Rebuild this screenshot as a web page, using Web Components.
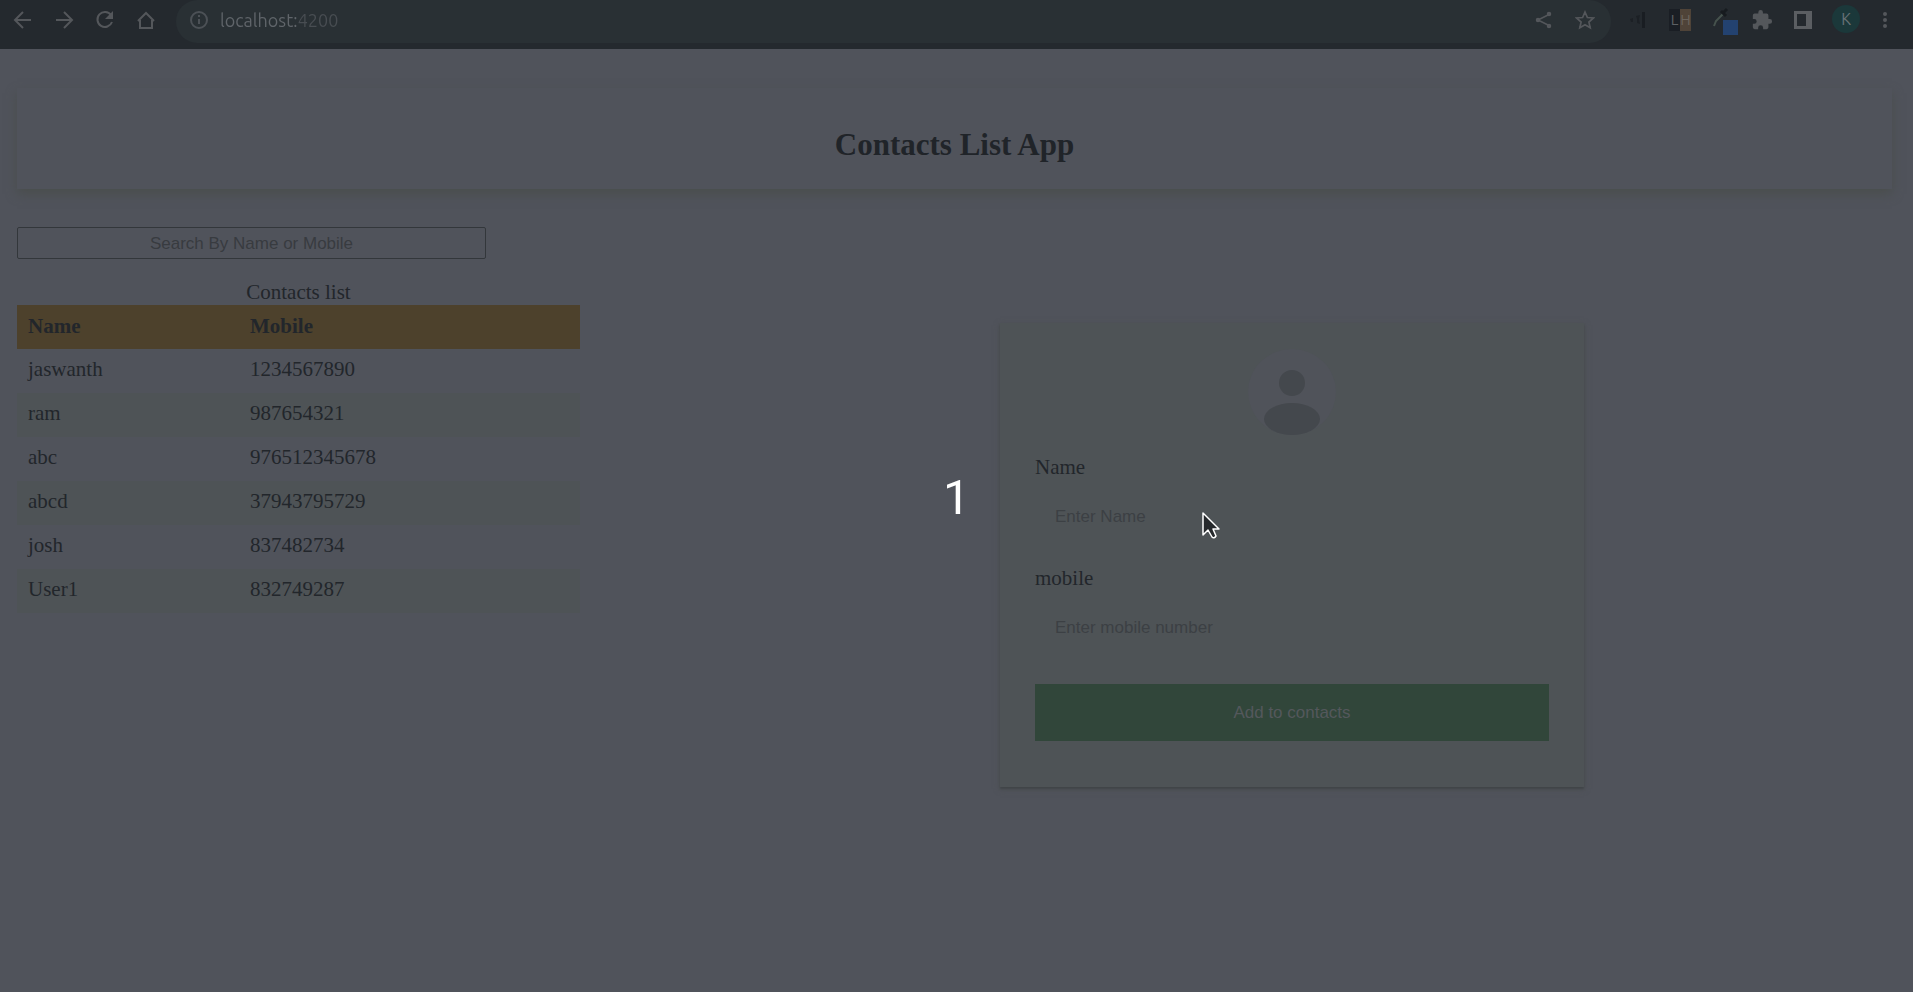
<!DOCTYPE html>
<html lang="en">
<head>
<meta charset="utf-8">
<title>Contacts List App</title>
<style>
  html, body { margin: 0; min-height: 100vh; }
  body { background: #50535b; color: #22262b; font-family: "Liberation Serif", serif; font-size: 21px; overflow-x: hidden; }
</style>
</head>
<body>
<contacts-app></contacts-app>
<script>
const define = (name, html) => {
  const t = document.createElement('template');
  t.innerHTML = html;
  customElements.define(name, class extends HTMLElement {
    constructor() {
      super();
      this.attachShadow({ mode: 'open' }).append(t.content.cloneNode(true));
    }
  });
};

define('browser-bar', `
<style>
  :host { display: flex; align-items: flex-start; height: 49px; box-sizing: border-box; background: #24292e; color: #54575b; font-family: Ubuntu, "Noto Sans", sans-serif; padding-right: 20px; }
  button { all: unset; display: grid; place-items: center; width: 24px; height: 39px; flex: none; }
  .menu { width: 16px; }
  svg { display: block; }
  .nav { display: flex; gap: 17px; padding: 0 18px 0 11px; }
  .address { flex: 1; display: flex; align-items: center; height: 43px; background: #293034; border-radius: 22px; box-sizing: border-box; padding: 0 14px 4px 13px; gap: 11px; }
  .address input { all: unset; flex: 1; font-size: 18px; line-height: 24px; color: transparent; background: linear-gradient(90deg, #60656a 76px, #484d52 76px); -webkit-background-clip: text; background-clip: text; }
  .acts { display: flex; gap: 17px; }
  .ext { display: flex; gap: 17px; padding-left: 16px; }
  .avatar { width: 28px; height: 28px; margin-top: 5px; border-radius: 50%; background: #1b383a; display: grid; place-items: center; font-size: 16px; color: #687276; }
  .lh { display: flex; width: 22px; height: 22px; margin: 9px 1px 0; font-size: 15px; line-height: 22px; text-align: center; color: #5d6063; }
  .lh b { flex: 1; background: #1a1e24; font-weight: 400; }
  .lh b + b { background: #4f4338; color: #6b645d; }
</style>
<nav class="nav" aria-label="Browser">
  <button aria-label="Back"><svg width="24" height="24" viewBox="0 0 24 24" fill="none" stroke="currentColor" stroke-width="2"><path d="M20 12H4M12 4l-8 8 8 8"/></svg></button>
  <button aria-label="Forward"><svg width="24" height="24" viewBox="0 0 24 24" fill="none" stroke="currentColor" stroke-width="2"><path d="M4 12h16M12 4l8 8-8 8"/></svg></button>
  <button aria-label="Reload"><svg width="24" height="24" viewBox="0 0 24 24" fill="none" stroke="currentColor" stroke-width="2"><path d="M18 7A7.500 7.500 0 1 0 19 14"/><path d="M20 3v8h-8z" fill="currentColor" stroke="none"/></svg></button>
  <button aria-label="Home"><svg width="24" height="24" viewBox="0 0 24 24" fill="none" stroke="currentColor" stroke-width="2"><path d="M4 13l8-8 8 8M6 12v8h12v-8"/></svg></button>
</nav>
<div class="address">
  <svg width="20" height="20" viewBox="0 0 20 20" fill="none" stroke="#4c5156" stroke-width="2"><circle cx="10" cy="10" r="8"/><path d="M10 9v5M10 5v2"/></svg>
  <input type="text" aria-label="Address" value="localhost:4200">
  <div class="acts">
    <button aria-label="Share"><svg width="20" height="20" viewBox="0 0 20 20" fill="currentColor" stroke="currentColor" stroke-width="1.500"><path d="M4 10L16 4M4 10l12 6" fill="none"/><circle cx="4" cy="10" r="1.500"/><circle cx="15" cy="4" r="1.500"/><circle cx="15" cy="16" r="1.500"/></svg></button>
    <button aria-label="Bookmark"><svg width="20" height="20" viewBox="0 0 20 20" fill="none" stroke="currentColor" stroke-width="1.700"><path d="M10 2l2.400 5.500 6 .5-4.500 4 1.300 5.800L10 14.700l-5.200 3.100L6.100 12 1.600 8l6-.5z"/></svg></button>
  </div>
</div>
<div class="ext">
  <button aria-label="Sound meter"><svg width="20" height="20" viewBox="0 0 20 20"><path d="M1 9l3-1v4H2zM7 6l4-1-1 4 1 5-3-1V9z" fill="#1c2025"/><path d="M13 2h3v16h-3z" fill="#191d22"/></svg></button>
  <div class="lh"><b>L</b><b>H</b></div>
  <button aria-label="Color picker"><svg width="30" height="32" viewBox="0 0 30 32"><path d="M5 22l2-5 7-7" fill="none" stroke="#46524d" stroke-width="2"/><path d="M12 7l5 5M14 9l4-4" stroke="#171b1f" stroke-width="3"/><path d="M14 16h15v15H14z" fill="#234270"/></svg></button>
  <button aria-label="Extensions"><svg width="22" height="22" viewBox="0 0 24 24" fill="currentColor"><path d="M20.500 11H19V7a2 2 0 0 0-2-2h-4V3.500a2.500 2.500 0 0 0-5 0V5H4a2 2 0 0 0-2 2v3.800h1.500a2.700 2.700 0 0 1 0 5.400H2V20a2 2 0 0 0 2 2h3.800v-1.500a2.700 2.700 0 0 1 5.400 0V22H17a2 2 0 0 0 2-2v-4h1.500a2.500 2.500 0 0 0 0-5z"/></svg></button>
  <button aria-label="Side panel"><svg width="18" height="18" viewBox="0 0 18 18"><path d="M0 0h18v18H0zM3 3v12h9V3z" fill="#5b5e62" fill-rule="evenodd"/></svg></button>
  <div class="avatar">K</div>
  <button class="menu" aria-label="Menu"><svg width="6" height="20" viewBox="0 0 6 20" fill="currentColor"><circle cx="3" cy="4" r="2"/><circle cx="3" cy="10" r="2"/><circle cx="3" cy="16" r="2"/></svg></button>
</div>`);

define('app-header', `
<style>
  :host { display: grid; place-items: center; height: 101px; box-shadow: 0 5px 10px #4a4e4d; background: #50535b; }
  h1 { margin: 12px 0 0; font-size: 31px; line-height: 36px; color: #202429; }
</style>
<h1><slot></slot></h1>`);

define('contact-search', `
<style>
  :host { display: block; }
  input { display: block; box-sizing: border-box; width: 100%; height: 32px; padding: 1px 0 0; border: 1px solid #33373b; border-radius: 2px; background: none; color: inherit; font: 17px "Liberation Sans", sans-serif; text-align: center; }
  input::placeholder { color: #383b40; opacity: 1; }
</style>
<input type="text" aria-label="Search contacts" placeholder="Search By Name or Mobile">`);

define('contact-table', `
<style>
  :host { display: block; }
  table { width: 100%; border-collapse: collapse; table-layout: fixed; line-height: 24px; }
  caption { padding-bottom: 1px; }
  th, td { height: 44px; box-sizing: border-box; padding: 8px 11px 12px; text-align: left; }
  th:first-child { width: 222px; }
  th { background: #4d412c; padding-top: 9px; padding-bottom: 11px; }
  tbody tr:nth-child(even) { background: #4e5356; }
</style>
<table>
  <caption>Contacts list</caption>
  <thead><tr><th scope="col">Name</th><th scope="col">Mobile</th></tr></thead>
  <tbody>
    <tr><td>jaswanth</td><td>1234567890</td></tr>
    <tr><td>ram</td><td>987654321</td></tr>
    <tr><td>abc</td><td>976512345678</td></tr>
    <tr><td>abcd</td><td>37943795729</td></tr>
    <tr><td>josh</td><td>837482734</td></tr>
    <tr><td>User1</td><td>832749287</td></tr>
  </tbody>
</table>`);

define('contact-form', `
<style>
  :host { display: block; box-sizing: border-box; width: 584px; max-width: 100%; padding: 26px 35px 46px; background: #4e5356; box-shadow: 0 2px 2px #414548, 0 2px 6px #4d5053; }
  svg { display: block; margin: 0 auto 20px; }
  label { display: block; line-height: 24px; }
  input { display: block; box-sizing: border-box; width: 100%; height: 51px; margin: 12px 0 24px; padding: 0 20px; border: 0; background: none; font: 17px "Liberation Sans", sans-serif; }
  input::placeholder { color: #3c4044; opacity: 1; }
  button { display: block; width: 100%; height: 57px; margin-top: 31px; border: 0; background: #31463a; color: #54585c; font: 17px "Liberation Sans", sans-serif; }
</style>
<form>
  <svg width="88" height="86" viewBox="0 0 88 86" aria-hidden="true"><ellipse cx="44" cy="43" rx="44" ry="43" fill="#50535a"/><circle cx="44" cy="34" r="13" fill="#44484d"/><ellipse cx="44" cy="70" rx="28" ry="16" fill="#44484d"/></svg>
  <label for="name">Name</label>
  <input id="name" type="text" placeholder="Enter Name">
  <label for="mobile">mobile</label>
  <input id="mobile" type="tel" placeholder="Enter mobile number">
  <button type="button">Add to contacts</button>
</form>`);

define('count-down', `
<style>
  :host { position: fixed; inset: 0; display: grid; place-items: center; padding-top: 4px; color: #fff; font: 48px/56px Roboto, sans-serif; pointer-events: none; }
</style>
<slot></slot>`);

define('mouse-pointer', `
<style>
  :host { display: block; pointer-events: none; }
  svg { display: block; }
</style>
<svg width="20" height="30" viewBox="0 0 20 30"><path d="M2 2v22l5-5 4 7q2 2 4-1l-3-7h6z" fill="#26292c" stroke="#fff" stroke-width="1.500" stroke-linejoin="round"/></svg>`);

define('contacts-app', `
<style>
  :host { display: block; }
  main { padding: 39px 21px 40px 17px; }
  .columns { display: flex; align-items: flex-start; margin-top: 38px; }
  .list { flex: 0 1 983px; }
  contact-search { width: 25vw; max-width: 469px; }
  contact-table { width: 30vw; max-width: 563px; margin-top: 21px; }
  .entry { position: relative; margin-top: 96px; }
  .entry mouse-pointer { position: absolute; left: 201px; top: 188px; }
</style>
<browser-bar></browser-bar>
<main>
  <app-header>Contacts List App</app-header>
  <div class="columns">
    <section class="list"><contact-search></contact-search><contact-table></contact-table></section>
    <section class="entry"><contact-form></contact-form><mouse-pointer></mouse-pointer></section>
  </div>
</main>
<count-down>1</count-down>`);
</script>
</body>
</html>
